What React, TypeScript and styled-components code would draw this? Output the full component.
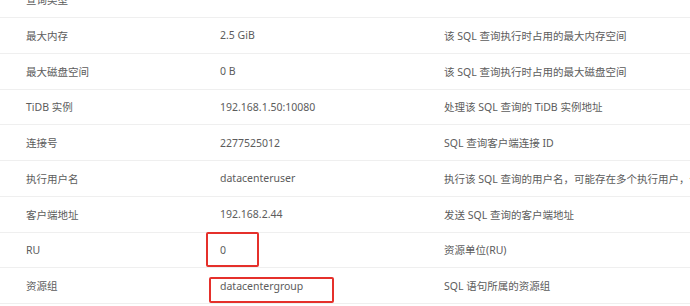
import styled, { createGlobalStyle } from 'styled-components';

type Field = {
  label: string;
  value: string;
  desc: string;
  mark?: 'small' | 'wide';
};

const fields: Field[] = [
  { label: '查询类型', value: '', desc: '' },
  { label: '最大内存', value: '2.5 GiB', desc: '该 SQL 查询执行时占用的最大内存空间' },
  { label: '最大磁盘空间', value: '0 B', desc: '该 SQL 查询执行时占用的最大磁盘空间' },
  { label: 'TiDB 实例', value: '192.168.1.50:10080', desc: '处理该 SQL 查询的 TiDB 实例地址' },
  { label: '连接号', value: '2277525012', desc: 'SQL 查询客户端连接 ID' },
  {
    label: '执行用户名',
    value: 'datacenteruser',
    desc: '执行该 SQL 查询的用户名，可能存在多个执行用户，仅显示其中某一个',
  },
  { label: '客户端地址', value: '192.168.2.44', desc: '发送 SQL 查询的客户端地址' },
  { label: 'RU', value: '0', desc: '资源单位(RU)', mark: 'small' },
  { label: '资源组', value: 'datacentergroup', desc: 'SQL 语句所属的资源组', mark: 'wide' },
];

const GlobalStyle = createGlobalStyle`
  html, body {
    margin: 0;
    padding: 0;
    background: #fff;
    overflow: hidden;
  }
  body {
    font-family: "Noto Sans", "Noto Sans CJK SC", sans-serif;
  }
`;

const App = () => (
  <>
    <GlobalStyle />
    <Table>
      {fields.map(f => (
        <Row key={f.label}>
          <Cell>{f.label}</Cell>
          <ValueCell>
            {f.value}
            {f.mark && <Mark variant={f.mark} />}
          </ValueCell>
          <Cell>{f.desc}</Cell>
        </Row>
      ))}
    </Table>
  </>
);

const Table = styled.div`
  width: 690px;
  overflow: hidden;
  margin-top: -17.75px;
  display: flex;
  flex-direction: column;
`;

const Row = styled.div`
  display: grid;
  grid-template-columns: 194px 224px 1fr;
  align-items: center;
  height: 34.75px;
  padding-left: 26px;
  border-bottom: 1px solid #efefef;
  font-size: 10.5px;
  color: #5c5c5c;
  white-space: nowrap;
`;

const Cell = styled.div`
  overflow: visible;
`;

const ValueCell = styled.div`
  position: relative;
  height: 100%;
  display: flex;
  align-items: center;
`;

// red annotation frame drawn over a value
const Mark = styled.span<{ variant: 'small' | 'wide' }>`
  position: absolute;
  box-sizing: border-box;
  border: 2px solid #e5302b;
  border-radius: 2px;
  left: ${p => (p.variant === 'small' ? '-14px' : '-11px')};
  top: ${p => (p.variant === 'small' ? '-1px' : '8.5px')};
  width: ${p => (p.variant === 'small' ? '53px' : '125px')};
  height: ${p => (p.variant === 'small' ? '35px' : '26px')};
`;

export default App;
